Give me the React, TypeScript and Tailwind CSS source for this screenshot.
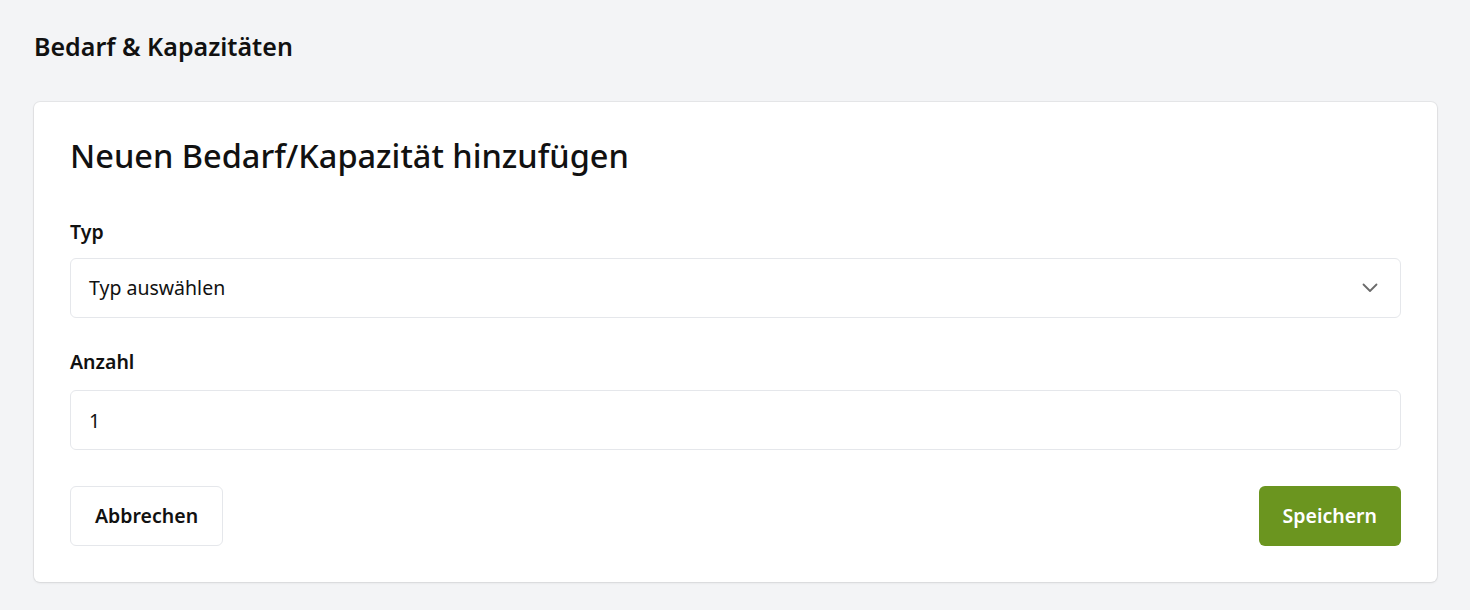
import { useState } from 'react';

const font = { fontFamily: '"Noto Sans", "Open Sans", sans-serif' };

function ChevronDown() {
  return (
    <svg width="16" height="16" viewBox="0 0 16 16" fill="none" className="text-[#6b6b6b]">
      <path d="M1.5 4.5 8 11l6.5-6.5" stroke="currentColor" strokeWidth="1.8" strokeLinecap="round" strokeLinejoin="round" />
    </svg>
  );
}

export default function App() {
  const [count, setCount] = useState('1');

  return (
    <div className="min-h-screen bg-[#f3f4f6] pl-[34px] pr-[33px] pt-[28px] pb-7 text-[#111]" style={font}>
      <h1 className="text-[25px] leading-9 font-semibold mb-[38px]">Bedarf &amp; Kapazitäten</h1>

      <div className="bg-white rounded-md shadow-[0_0_0_1px_rgba(0,0,0,0.05),0_1px_3px_rgba(0,0,0,0.08)] p-9">
        <h2 className="text-[32.5px] leading-9 font-medium mb-[44px]">Neuen Bedarf/Kapazität hinzufügen</h2>

        <label className="block text-[19.5px] leading-7 font-semibold mb-3">Typ</label>
        <button className="w-full h-[60px] flex items-center justify-between pl-[18px] pr-[22px] border border-[#e5e7eb] rounded-md bg-white text-[19.5px] text-left">
          <span>Typ auswählen</span>
          <ChevronDown />
        </button>

        <label className="block text-[19.5px] leading-7 font-semibold mt-[30px] mb-[14px]">Anzahl</label>
        <input
          value={count}
          onChange={(e) => setCount(e.target.value)}
          className="w-full h-[60px] px-[18px] border border-[#e5e7eb] rounded-md bg-white text-[19.5px] outline-none"
        />

        <div className="flex justify-between items-center mt-9">
          <button className="h-[60px] px-6 border border-[#e5e7eb] rounded-md bg-white text-[19.5px] font-semibold">
            Abbrechen
          </button>
          <button className="h-[60px] px-6 rounded-md bg-[#6b951f] text-white text-[19.5px] font-semibold">
            Speichern
          </button>
        </div>
      </div>
    </div>
  );
}
